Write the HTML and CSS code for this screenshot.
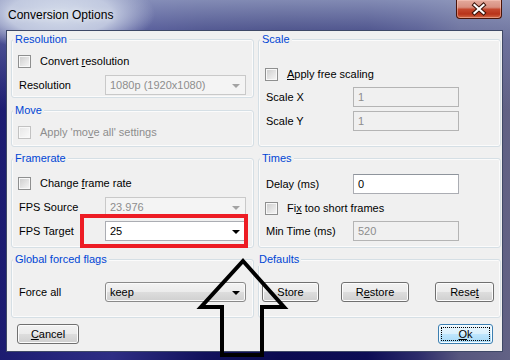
FILE: index.html
```html
<!DOCTYPE html>
<html>
<head>
<meta charset="utf-8">
<link rel="stylesheet" href="styles.css">
</head>
<body>
<div class="window">
  <div class="titlebar">
    <span class="title">Conversion Options</span>
    <div class="close">
      <svg width="44" height="18" viewBox="0 0 44 18">
        <path d="M17.5 5 L26.5 13 M26.5 5 L17.5 13" stroke="#3a1208" stroke-width="4.2" stroke-linecap="square" fill="none"/>
        <path d="M17.5 5 L26.5 13 M26.5 5 L17.5 13" stroke="#ffffff" stroke-width="2.2" stroke-linecap="square" fill="none"/>
      </svg>
    </div>
  </div>
  <div class="client">
    <div class="grid">
      <div class="stack">
        <div class="grp g-res">
          <div class="legend">Resolution</div>
          <div class="check mt5"><span class="box"></span><span>Convert <u>r</u>esolution</span></div>
          <div class="field mt4"><span>Resolution</span><div class="combo dis"><span class="val">1080p (1920x1080)</span><span class="arr"></span></div></div>
        </div>
        <div class="grp g-move">
          <div class="legend">Move</div>
          <div class="check mt5 disabled"><span class="box"></span><span>Apply 'mo<u>v</u>e all' settings</span></div>
        </div>
      </div>
      <div class="grp r">
        <div class="legend">Scale</div>
        <div class="check mt18"><span class="box"></span><span><u>A</u>pply free scaling</span></div>
        <div class="field mt3"><span>Scale X</span><div class="tbox dis">1</div></div>
        <div class="field mt4"><span>Scale Y</span><div class="tbox dis">1</div></div>
      </div>
      <div class="grp">
        <div class="legend">Framerate</div>
        <div class="check mt8"><span class="box"></span><span>Change <u>f</u>rame rate</span></div>
        <div class="field mt4"><span>FPS Source</span><div class="combo dis"><span class="val">23.976</span><span class="arr"></span></div></div>
        <div class="field mt4"><span>FPS Target</span><div class="combo edit"><span class="val">25</span><span class="arr"></span></div></div>
      </div>
      <div class="grp r">
        <div class="legend">Times</div>
        <div class="field mt9"><span>Delay (ms)</span><div class="tbox">0</div></div>
        <div class="check mt4"><span class="box"></span><span>Fi<u>x</u> too short frames</span></div>
        <div class="field mt3"><span>Min Time (ms)</span><div class="tbox dis">520</div></div>
      </div>
      <div class="grp">
        <div class="legend">Global forced flags</div>
        <div class="field mt16"><span>Force all</span><div class="combo list"><span class="val">keep</span><span class="arr"></span></div></div>
      </div>
      <div class="grp defaults">
        <div class="legend">Defaults</div>
        <div class="btnrow mt16">
          <div class="btn w-store">Store</div>
          <div class="btn w-restore">R<u>e</u>store</div>
          <div class="btn w-reset">Rese<u>t</u></div>
        </div>
      </div>
    </div>
    <div class="actions">
      <div class="btn w-cancel"><u>C</u>ancel</div>
      <div class="btn ok"><span class="focus"><u>O</u>k</span></div>
    </div>
  </div>
  <div class="redbox"></div>
  <svg class="arrow" width="510" height="360" viewBox="0 0 510 360">
    <polygon points="243,261 284,307 262,307 262,355 222,355 222,307 201,307" fill="none" stroke="#000" stroke-width="4"/>
  </svg>
</div>
</body>
</html>
```
FILE: styles.css
```css
html, body {
  margin: 0;
  padding: 0;
  background: #ffffff;
}
body {
  font-family: "Liberation Sans", Arial, sans-serif;
  font-size: 11px;
  color: #000;
}
.window {
  position: relative;
  width: 510px;
  height: 360px;
  overflow: hidden;
  background:
    radial-gradient(ellipse 95px 38px at 60px 14px, rgba(214,222,236,0.98) 0%, rgba(200,208,228,0.9) 55%, rgba(170,180,210,0) 100%),
    linear-gradient(180deg, rgba(150,160,196,0.85) 0px, rgba(120,130,180,0.5) 40px, rgba(40,40,110,0) 110px),
    linear-gradient(90deg, #1c1c70 0%, #26267c 12%, #2e2e84 22%, #12125c 40%, #0a0a50 55%, #0d0d55 72%, #2c2c6a 82%, #56567e 90%, #626285 100%);
}
.titlebar {
  display: flex;
  align-items: flex-start;
  height: 30px;
}
.title {
  font-size: 12px;
  line-height: 14px;
  margin: 8px 0 0 8px;
  color: #000;
  text-shadow: 0 0 6px rgba(255,255,255,0.9);
}
.close {
  margin-left: auto;
  margin-right: 8px;
  width: 44px;
  height: 18px;
  border: 1px solid #4a1408;
  border-top: none;
  border-radius: 0 0 4px 4px;
  background: linear-gradient(180deg, #e4aa9c 0%, #d89080 40%, #c4482e 52%, #b8331a 78%, #d26a46 100%);
  box-shadow: inset 0 0 0 1px rgba(255,210,200,0.45);
}
.close svg { display: block; }
.client {
  margin: 0 7px 0 6px;
  height: 322px;
  box-sizing: border-box;
  border: 1px solid #3e4866;
  background: #f0f0f0;
  padding: 1px 1px 0 4px;
}
.grid {
  display: grid;
  grid-template-columns: 243px 243px;
  grid-template-rows: 115px 97px 66px;
  column-gap: 4px;
  row-gap: 4px;
}
.stack {
  display: flex;
  flex-direction: column;
}
.grp {
  margin-top: 7px;
  border: 1px solid #d5dfe5;
  border-radius: 3px;
  box-sizing: border-box;
  padding: 0 8px 0 6px;
  box-shadow: inset 0 0 0 1px #fbfbfb;
}
.g-res { height: 59px; flex: none; }
.g-move { margin-top: 12px; flex: 1; }
.legend {
  width: max-content;
  margin: -8px 0 0 -5px;
  padding: 0 2px;
  line-height: 14px;
  height: 14px;
  background: #f0f0f0;
  color: #0046d5;
}
.mt3 { margin-top: 3px; }
.mt4 { margin-top: 4px; }
.mt5 { margin-top: 5px; }
.mt8 { margin-top: 8px; }
.mt9 { margin-top: 9px; }
.mt16 { margin-top: 16px; }
.mt18 { margin-top: 18px; }
.check {
  display: flex;
  align-items: center;
  gap: 9px;
  height: 20px;
}
.box {
  width: 13px;
  height: 13px;
  box-sizing: border-box;
  border: 1px solid #8e8f8f;
  background: linear-gradient(135deg, #cbcbcb 0%, #e4e4e4 55%, #f7f7f7 100%);
  box-shadow: inset 0 0 0 1px #f8f8f8;
  flex: none;
}
.check.disabled { color: #8d8d8d; }
.check.disabled .box {
  border-color: #c2c2c2;
  background: linear-gradient(135deg, #e6e6e6 0%, #f2f2f2 60%, #fafafa 100%);
}
.field {
  display: grid;
  grid-template-columns: 86px auto;
  align-items: center;
  height: 20px;
  padding-left: 1px;
}
.grp.r .field { grid-template-columns: 87px auto; }
.combo {
  width: 141px;
  height: 20px;
  box-sizing: border-box;
  display: flex;
  align-items: center;
  padding: 0 5px 0 4px;
  border: 1px solid #abadb3;
  background: #fff;
}
.combo .val { flex: 1; }
.arr {
  width: 0;
  height: 0;
  border-left: 4px solid transparent;
  border-right: 4px solid transparent;
  border-top: 4px solid #000;
  margin-top: 1px;
}
.combo.dis {
  border-color: #c9c9c9;
  background: #f4f4f4;
  color: #8d8d8d;
}
.combo.dis .arr { border-top-color: #a3a3a3; }
.combo.list {
  border: 1px solid #8a8a8a;
  border-radius: 3px;
  background: linear-gradient(180deg, #f3f3f3 0%, #ebebeb 50%, #dddddd 51%, #d0d0d0 100%);
  box-shadow: inset 0 0 0 1px #fafafa;
}
.tbox {
  width: 106px;
  height: 20px;
  box-sizing: border-box;
  border: 1px solid #abadb3;
  border-top-color: #8e949c;
  background: #fff;
  padding-left: 4px;
  line-height: 18px;
}
.tbox.dis {
  border-color: #b4b4b4;
  background: #f0f0f0;
  color: #8d8d8d;
}
.defaults { padding: 0 6px 0 3px; }
.btnrow {
  display: flex;
}
.btn {
  height: 20px;
  box-sizing: border-box;
  border: 1px solid #707070;
  border-radius: 3px;
  background: linear-gradient(180deg, #f2f2f2 0%, #ebebeb 50%, #dddddd 51%, #cfcfcf 100%);
  box-shadow: inset 0 0 0 1px #fcfcfc;
  display: flex;
  align-items: center;
  justify-content: center;
}
.w-store { width: 57px; }
.w-restore { width: 68px; margin-left: 22px; }
.w-reset { width: 59px; margin-left: auto; }
.w-cancel { width: 62px; }
.actions {
  display: flex;
  justify-content: space-between;
  margin-top: 6px;
  padding: 0 8px 0 6px;
}
.ok {
  width: 55px;
  border-color: #3c7fb1;
  background: linear-gradient(180deg, #eaf6fd 0%, #d9f0fc 50%, #bee6fd 51%, #a7d9f5 100%);
  box-shadow: inset 0 0 0 1px #f4fbff;
  padding: 2px;
  align-items: stretch;
}
.focus {
  flex: 1;
  border: 1px dotted #000;
  display: flex;
  align-items: center;
  justify-content: center;
}
.redbox {
  position: absolute;
  left: 80px;
  top: 214px;
  width: 168px;
  height: 34px;
  box-sizing: border-box;
  border: 4px solid #ed1c24;
}
.arrow {
  position: absolute;
  left: 0;
  top: 0;
  pointer-events: none;
}
```
